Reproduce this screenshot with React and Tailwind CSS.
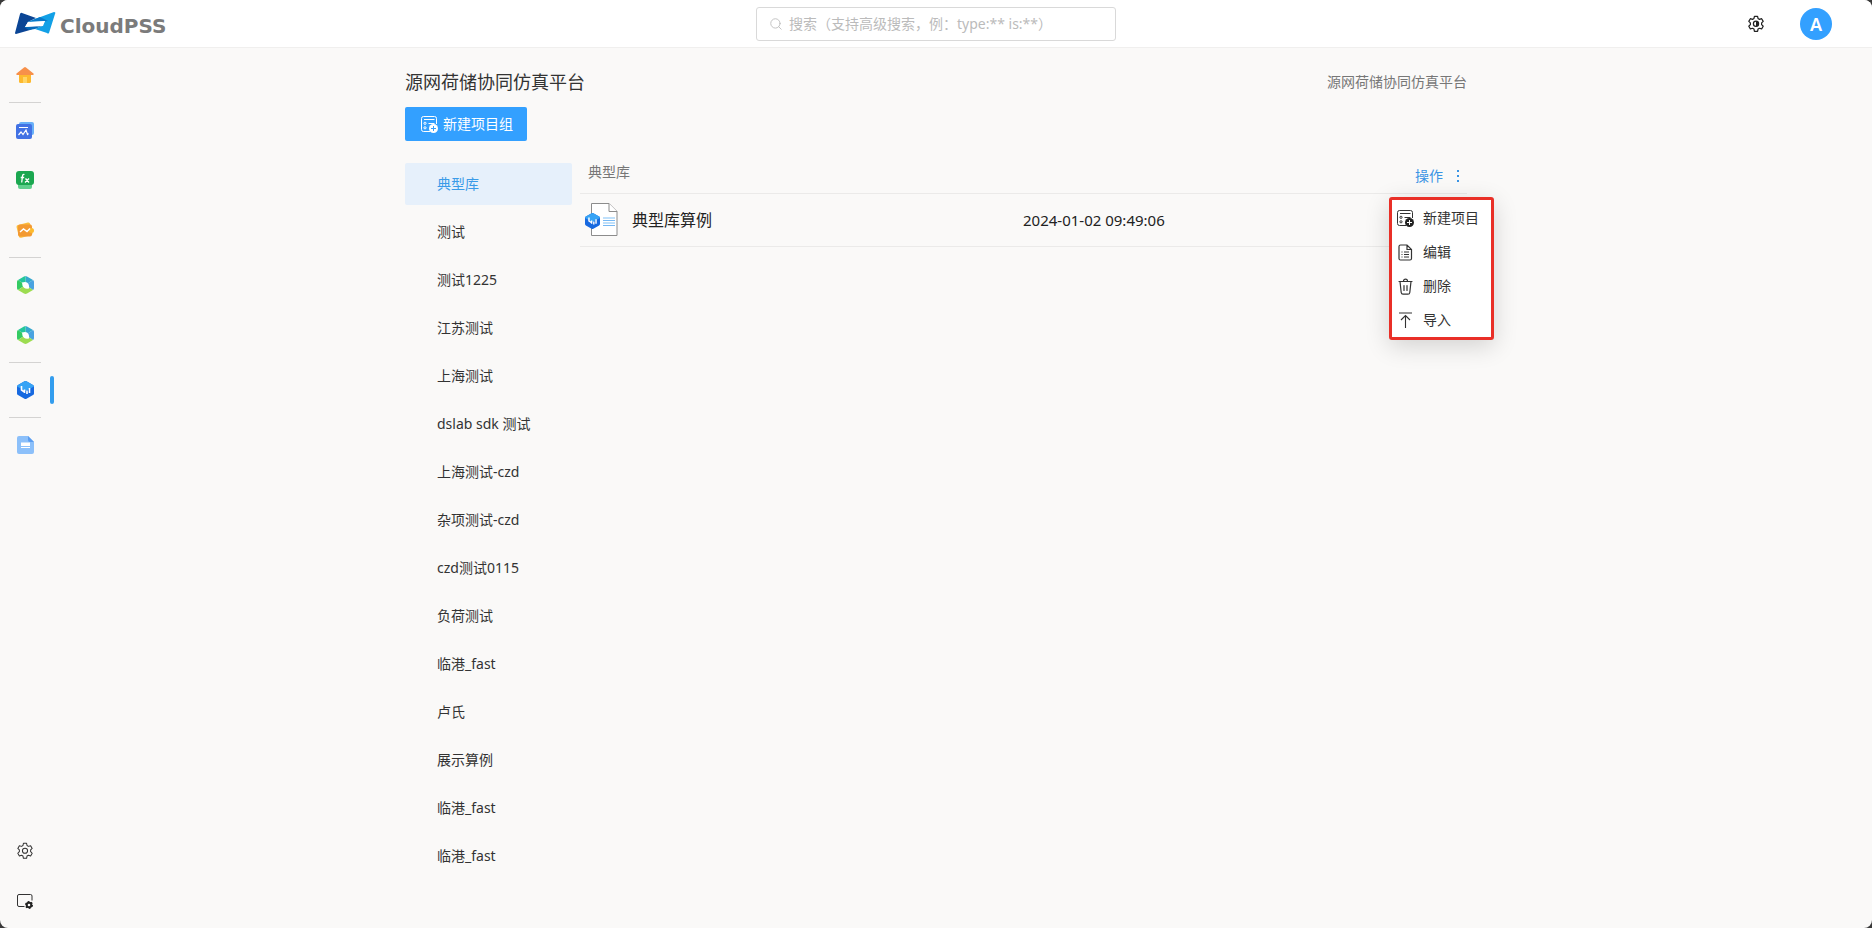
import { useState } from 'react';
import { FiSearch } from 'react-icons/fi';

const groups = [
    '典型库', '测试', '测试1225', '江苏测试', '上海测试', 'dslab sdk 测试', '上海测试-czd', '杂项测试-czd',
    'czd测试0115', '负荷测试', '临港_fast', '卢氏', '展示算例', '临港_fast', '临港_fast',
];

// ─── Icons ────────────────────────────────────────────────────────────────────

const Logo = () => (
    <svg width="41" height="24" viewBox="0 0 41 24">
        <path d="M7 1 L21 6 L13 10 L10 15 L24 14 L15 18 L1 22 Q0 22 0 21 L5 2 Q6 0 7 1Z" fill="#0b4595" />
        <path d="M20 7 L39 0 Q41 0 40 2 L34 21 Q33 22 32 21 L20 17 L27 14 L30 9 L13 10Z" fill="#12a0e6" />
        <path d="M20 7 L25 5 L33 9 L13 10Z" fill="#0878c8" />
        <path d="M9 15 L27 14 L20 17 L14 18Z" fill="#0669b9" />
        <path d="M13 10 L30 9 L28 14 L10 15Z" fill="#fff" />
    </svg>
);

const HomeIcon = () => (
    <svg width="18" height="16" viewBox="0 0 18 16">
        <path d="M3 7h12v7.500q0 1.500-1.500 1.500h-9q-1.500 0-1.500-1.500z" fill="#fdb92e" />
        <path d="M8 0.500q1-.8 2 0l7.500 6q.8 1.200-.8 1.500H1.300Q-.3 7.700.5 6.500z" fill="#f7904a" />
        <path d="M7 10h4v6H7z" fill="#ffd565" />
    </svg>
);

const ChartIcon = () => (
    <svg width="18" height="17" viewBox="0 0 18 17">
        <rect x="3" y="0" width="15" height="13" rx="2" fill="#68b0f8" />
        <rect x="0" y="2" width="16" height="15" rx="2" fill="#4272e4" />
        <path d="M3 5.500h9M2.500 13l2.500-3 2 2.500L10 8l1.500 4.500 1-1" fill="none" stroke="#fff" strokeWidth="1.200" />
    </svg>
);

const FunctionIcon = () => (
    <svg width="18" height="18" viewBox="0 0 18 18">
        <rect x="2" y="7" width="14" height="11" rx="2" fill="#5fcf8c" />
        <rect x="0" y="0" width="18" height="14" rx="3" fill="#1ba750" />
        <path d="M8.500 3.500Q6.800 3 6.500 5L5.700 11.500M4.700 6.500h3.500M9.500 7.500l3.500 4M13 7.500l-4 4" fill="none" stroke="#fff" strokeWidth="1.300" />
    </svg>
);

const WaveIcon = () => (
    <svg width="18" height="16" viewBox="0 0 18 16">
        <rect x="1.500" y="1.500" width="14" height="13" rx="2" fill="#fbbd3c" transform="rotate(-14 9 8)" />
        <rect x="2" y="2.500" width="14" height="12" rx="2" fill="#f39a32" />
        <circle cx="15.500" cy="8.500" r="2.500" fill="#fdbb2d" />
        <path d="M4 10l3.500-3 3.500 2.500L14 6.500" fill="none" stroke="#fff" strokeWidth="1.500" />
    </svg>
);

const LeafIcon = () => (
    <svg width="17" height="18" viewBox="0 0 17 18">
        <path d="M8.500 0Q9.200 0 10 .5L16 4 8.500 9z" fill="#35a8cf" />
        <path d="M8.500 0Q7.800 0 7 .5L1 4l7.500 5z" fill="#24c79a" />
        <path d="M1 4Q0 4.500 0 6v6q0 1.300 1 2l7.500-5z" fill="#34cb62" />
        <path d="M16 4q1 .5 1 2v6q0 1.300-1 2L8.500 9z" fill="#4aa3e0" />
        <path d="M1 14l6 3.500q1.500.8 3 0l6-3.500-7.500-5z" fill="#9cdc50" />
        <path d="M5 6.500Q10 5 11.500 8q1 2.500.5 4.500-3.500.5-5-.8Q5 10 5 6.500z" fill="#fff" />
    </svg>
);

const LabIcon = ({ className }) => (
    <svg className={className} viewBox="0 0 17 18">
        <path d="M8.500 0Q9 0 9.500.3L16 4q1 .5 1 1.500v7q0 1-1 1.500l-6.500 3.700q-1 .6-2 0L1 14q-1-.5-1-1.500v-7Q0 4.500 1 4L7.500.3Q8 0 8.500 0z" fill="#1769e0" />
        <path d="M8.500 0Q9 0 9.500.3L16 4q1 .5 1 1.500L8.500 10 0 5.500Q0 4.500 1 4L7.500.3Q8 0 8.500 0z" fill="#37a3f5" />
        <path d="M4.500 5v4.500M4.500 9l3 2M7.500 8.500V12M10 9.500V13M12.500 7v5" fill="none" stroke="#fff" strokeWidth="1.600" />
    </svg>
);

const DocIcon = () => (
    <svg width="17" height="18" viewBox="0 0 17 18">
        <path d="M2 0h9l6 6v10q0 2-2 2H2q-2 0-2-2V2Q0 0 2 0z" fill="#8cc0fa" />
        <path d="M11 0l6 6h-4q-2 0-2-2z" fill="#5b9df0" />
        <path d="M4 6.500h9v3.500H4zM4 11h9v1H4z" fill="#fff" />
    </svg>
);

const gearPath = 'M6.600 1.200h2.800l.4 1.900 1.300.8 1.900-.6 1.400 2.400-1.400 1.300v1.600l1.400 1.400-1.400 2.400-1.900-.6-1.300.7-.4 2H6.600l-.4-2-1.300-.7-1.900.6L1.600 10 3 8.600V7L1.600 5.700 3 3.300l1.900.6 1.300-.8z';

const GearIcon = () => (
    <svg width="18" height="18" viewBox="0 0 16 16" fill="none" stroke="#333" strokeWidth="0.900" strokeLinejoin="round">
        <path d={gearPath} />
        <circle cx="8" cy="7.800" r="2.300" />
    </svg>
);

const ThemeIcon = () => (
    <svg width="18" height="18" viewBox="0 0 16 16" fill="none" stroke="#222" strokeWidth="1.100" strokeLinejoin="round">
        <path d={gearPath} />
        <circle cx="8" cy="7.800" r="2.300" />
        <path d="M8 5.500a2.300 2.300 0 0 1 0 4.600z" fill="#222" stroke="none" />
    </svg>
);

const ScreenIcon = () => (
    <svg width="16" height="15" viewBox="0 0 16 15">
        <path d="M7.500 12.500H2q-1.500 0-1.500-1.500V2Q.5.500 2 .5h11.500Q15 .5 15 2v4.500" fill="none" stroke="#333" />
        <circle cx="12" cy="11" r="2.300" fill="none" stroke="#222" strokeWidth="2" />
        <circle cx="12" cy="11" r="3.400" fill="none" stroke="#222" strokeWidth="1.200" strokeDasharray="1.800 1.760" />
    </svg>
);

const NewItemIcon = ({ plusFill, plusStroke }) => (
    <svg width="17" height="17" viewBox="0 0 17 17" fill="none" stroke="currentColor">
        <path d="M9 15.500H2.500q-2 0-2-2v-11q0-2 2-2h11q2 0 2 2V8M3 3.500h10.500M7.500 7.500h6" />
        <circle cx="4" cy="7.300" r="1.100" />
        <circle cx="4" cy="11.800" r="1.100" />
        <circle cx="12.500" cy="12.500" r="4.500" fill={plusFill} stroke="none" />
        <path d="M12.500 10v5M10 12.500h5" stroke={plusStroke} />
    </svg>
);

const EditIcon = () => (
    <svg width="15" height="17" viewBox="0 0 15 17" fill="none" stroke="currentColor" strokeWidth="1.200">
        <path d="M2.500 1H9l4.500 4.500v9q0 1.500-1.500 1.500H2.500Q1 16 1 14.500v-12Q1 1 2.500 1zM9 1v4.500h4.500" />
        <path d="M6 8h5M6 10.500h5M6 13h5M3.500 8h1M3.500 10.500h1M3.500 13h1" />
    </svg>
);

const TrashIcon = () => (
    <svg width="15" height="17" viewBox="0 0 15 17" fill="none" stroke="currentColor" strokeWidth="1.200" strokeLinecap="round">
        <path d="M1 3.500h13M5.500 3.200a2 2 0 0 1 4 0M2 3.500l1.200 11q.2 1.700 1.800 1.700h5q1.600 0 1.800-1.700L13 3.500M6 7.500v5M9 7.500v5" />
    </svg>
);

const ImportIcon = () => (
    <svg width="13" height="17" viewBox="0 0 13 17" fill="none" stroke="currentColor" strokeWidth="1.100">
        <path d="M0 1h13M6.500 16V3.500M2 8l4.500-4.500L11 8" />
    </svg>
);

const FileIcon = () => (
    <svg width="33" height="33" viewBox="0 0 33 33">
        <path d="M6.500.5H24l8 8v24H6.500z" fill="#fff" stroke="#8c8c8c" />
        <path d="M24 .5v8h8" fill="#fff" stroke="#8c8c8c" />
        <path d="M18 17.500h12M18 22.500h12" stroke="#77b8f3" />
        <path d="M18 15h12M18 20h12" stroke="#bfe0fb" strokeWidth="2" />
    </svg>
);

// ─── Layout ───────────────────────────────────────────────────────────────────

const navGroups = [
    [{ name: '首页', icon: <HomeIcon /> }],
    [{ name: '仿真', icon: <ChartIcon /> }, { name: '函数', icon: <FunctionIcon /> }, { name: '应用', icon: <WaveIcon /> }],
    [{ name: '能源一', icon: <LeafIcon /> }, { name: '能源二', icon: <LeafIcon /> }],
    [{ name: '项目', icon: <LabIcon className="h-[18px] w-[17px]" />, active: true }],
    [{ name: '文档', icon: <DocIcon /> }],
];

const menuItems = [
    { label: '新建项目', icon: <NewItemIcon plusFill="#222" plusStroke="#fff" /> },
    { label: '编辑', icon: <EditIcon /> },
    { label: '删除', icon: <TrashIcon /> },
    { label: '导入', icon: <ImportIcon /> },
];

const Header = () => (
    <header className="grid h-12 shrink-0 grid-cols-[1fr_360px_1fr] items-center border-b border-[#f0efee] bg-white">
        <a href="#" className="flex items-center gap-1 pl-[15px]">
            <Logo />
            <span className="pt-1 font-['DejaVu_Sans',sans-serif] text-xl leading-6 font-bold text-[#7b7b7b]">CloudPSS</span>
        </a>
        <label className="flex h-[34px] items-center gap-1.5 rounded-[3px] border border-[#d9d9d9] bg-white pl-3 text-[#bbb]">
            <FiSearch className="size-3.5" strokeWidth={1.5} />
            <input
                type="search"
                aria-label="搜索"
                placeholder="搜索（支持高级搜索，例：type:** is:**）"
                className="min-w-0 flex-1 bg-transparent text-sm outline-none placeholder:text-[#bbb]"
            />
        </label>
        <div className="flex items-center justify-end gap-[35px] pr-10">
            <button aria-label="主题"><ThemeIcon /></button>
            <button className="size-8 rounded-full bg-[#33a0ff] text-lg leading-8 font-semibold text-white">A</button>
        </div>
    </header>
);

const Sidebar = () => (
    <nav className="flex w-[54px] shrink-0 flex-col justify-between py-0.5">
        <div>
            {navGroups.map((items, index) => (
                <div key={index}>
                    {index > 0 && <div className="flex h-[5px] w-[50px] items-center px-[9px]"><hr className="w-full border-[#d4d3d2]" /></div>}
                    {items.map((item) => (
                        <div key={item.name} className="flex h-[50px] items-center justify-between">
                            <a href="#" aria-label={item.name} className="flex w-[50px] justify-center">{item.icon}</a>
                            {item.active && <span className="h-7 w-1 rounded-sm bg-[#339dee]" />}
                        </div>
                    ))}
                </div>
            ))}
        </div>
        <div className="w-[50px]">
            <button aria-label="设置" className="flex h-[50px] w-full items-center justify-center"><GearIcon /></button>
            <button aria-label="显示设置" className="flex h-[50px] w-full items-center justify-center"><ScreenIcon /></button>
        </div>
    </nav>
);

const ActionMenu = () => (
    <div className="absolute top-[34px] -right-[27px] w-[105px] rounded-[3px] border-3 border-[#e92f27] bg-white pt-px shadow-[0_6px_24px_rgba(0,0,0,0.16)]">
        {menuItems.map((item) => (
            <button key={item.label} className="flex h-[34px] w-full items-center gap-2 pl-[3px] text-sm text-[#333]">
                <span className="flex w-5 justify-center">{item.icon}</span>
                {item.label}
            </button>
        ))}
    </div>
);

export default function App() {
    const [selected, setSelected] = useState(0);

    return (
        <div className="min-h-screen bg-[#3a3a3a] font-['Noto_Sans','Noto_Sans_CJK_SC',sans-serif] text-[#333]">
            <div className="flex min-h-screen flex-col overflow-hidden rounded-lg bg-[#faf9f8]">
                <Header />
                <div className="flex flex-1">
                    <Sidebar />
                    <main className="flex-1 pt-5 pr-[54px]">
                        <div className="mx-auto max-w-[1062px]">
                            <div className="flex h-7 items-center justify-between">
                                <h1 className="text-lg">源网荷储协同仿真平台</h1>
                                <span className="text-sm text-[#777]">源网荷储协同仿真平台</span>
                            </div>
                            <button className="mt-[11px] flex h-[34px] items-center gap-[5px] rounded-xs bg-[#33a0ff] pr-3.5 pl-4 text-sm text-white">
                                <NewItemIcon plusFill="#fff" plusStroke="#33a0ff" />
                                新建项目组
                            </button>

                            <div className="mt-[22px] flex gap-2">
                                {/* Project groups */}
                                <ul className="w-[167px] shrink-0 space-y-1.5">
                                    {groups.map((name, index) => (
                                        <li key={index}>
                                            <button
                                                onClick={() => setSelected(index)}
                                                className={`h-[42px] w-full rounded-xs pl-8 text-left text-sm ${index === selected ? 'bg-[#e6f0fb] text-[#3a9be8]' : ''}`}
                                            >
                                                {name}
                                            </button>
                                        </li>
                                    ))}
                                </ul>

                                {/* Projects of the selected group */}
                                <section className="flex-1">
                                    <div className="relative flex h-[31px] justify-between border-b border-[#ebeae9] pr-1.5 pl-2">
                                        <h2 className="text-sm leading-[18px] text-[#777]">{groups[selected]}</h2>
                                        <button className="flex h-[26px] items-center gap-3 text-sm text-[#3a94e4]">
                                            操作
                                            <svg width="6" height="12" viewBox="0 0 6 12" fill="currentColor">
                                                <path d="M2 0h2v2H2zM2 5h2v2H2zM2 10h2v2H2z" />
                                            </svg>
                                        </button>
                                        <ActionMenu />
                                    </div>
                                    <table className="w-full text-base text-[#222]">
                                        <tbody>
                                            <tr className="h-[52px] border-b border-[#ebeae9]">
                                                <td className="w-[443px] pl-[5px]">
                                                    <a href="#" className="flex items-center gap-3.5">
                                                        <span className="relative">
                                                            <FileIcon />
                                                            <LabIcon className="absolute top-2.5 left-0 h-4 w-[15px]" />
                                                        </span>
                                                        典型库算例
                                                    </a>
                                                </td>
                                                <td className="text-[15px]">2024-01-02 09:49:06</td>
                                            </tr>
                                        </tbody>
                                    </table>
                                </section>
                            </div>
                        </div>
                    </main>
                </div>
            </div>
        </div>
    );
}
